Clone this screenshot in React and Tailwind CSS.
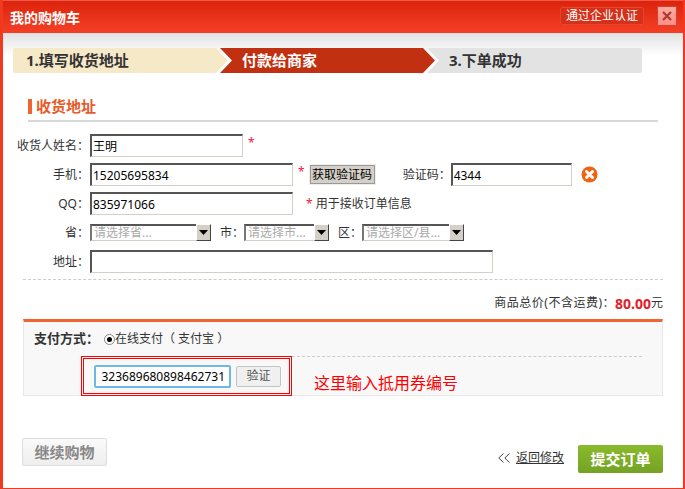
const font = "font-['Noto_Sans','Noto_Sans_CJK_SC',sans-serif]";

function TextInput({ value, width }) {
  return (
    <input
      readOnly
      defaultValue={value}
      className={`${width} h-[23px] border-2 border-t-[#555] border-l-[#555] border-r-[#d4d0c8] border-b-[#d4d0c8] border-r border-b bg-white pl-px text-[12px] text-black outline-none`}
    />
  );
}

function Select({ text, width }) {
  return (
    <div className={`${width} h-[17px] flex items-stretch border-t-2 border-l-2 border-t-[#555] border-l-[#777] border-b border-b-[#d4d0c8] bg-white`}>
      <span className="flex-1 pl-[2px] text-[12px] leading-[14px] text-[#aaa] whitespace-nowrap">{text}</span>
      <span className="w-[15px] -mt-[2px] -mb-px flex items-center justify-center bg-[#d4d0c8] border border-t-white border-l-white border-r-[#444] border-b-[#444]">
        <svg width="9" height="5" viewBox="0 0 9 5"><path d="M0 0h9L4.5 5z" fill="#000" /></svg>
      </span>
    </div>
  );
}

function Row({ label, h, mt, children }) {
  return (
    <div className={`flex items-center ${h} ${mt}`}>
      <label className="w-[74px] pr-[1px] text-right text-[12px] text-[#333] whitespace-nowrap">{label}：</label>
      {children}
    </div>
  );
}

const Star = ({ className }) => <span className={`text-[12px] text-[#f0203a] ${className}`}>*</span>;

export default function App() {
  return (
    <div className={`${font} w-[685px] h-[489px] flex flex-col bg-white border-l-[3px] border-r-2 border-b border-[#f0391f] overflow-hidden`}>

      {/* title bar */}
      <div className="h-[33px] shrink-0 flex items-center bg-gradient-to-b from-[#dc230b] to-[#f53f25] border-t border-[#f0594a] pl-[7px]">
        <span className="text-[14px] font-bold text-white">我的购物车</span>
        <div className="ml-auto flex items-center mr-[6px] -mt-[3px]">
          <span className="w-[84px] h-[18px] flex items-center justify-center rounded-[2px] bg-[#d5301a] border border-[#e8452e] text-[12px] leading-none text-white">通过企业认证</span>
          <span className="ml-[13px] w-[20px] h-[20px] flex items-center justify-center bg-gradient-to-b from-[#ffa9a0] to-[#ff8f86] border border-[#d8402e]">
            <svg width="10" height="10" viewBox="0 0 10 10"><path d="M1 1l8 8M9 1L1 9" stroke="#a83a34" strokeWidth="2.2" /></svg>
          </span>
        </div>
      </div>

      <div className="flex-1 flex flex-col bg-gradient-to-b from-[#e2e2e2] via-white via-[5%] to-white">

        {/* steps */}
        <div className="flex mt-[15px] ml-[10px] h-[25px]">
          <div className="w-[215px] rounded-l-[2px] bg-[#f6e9c8] pl-[13px] text-[15px] leading-[25px] font-bold text-[#333] [clip-path:polygon(0_0,203px_0,215px_50%,203px_100%,0_100%)]">1.填写收货地址</div>
          <div className="w-[215px] -ml-[8px] bg-[#c13010] pl-[22px] text-[15px] leading-[25px] font-bold text-white [clip-path:polygon(0_0,203px_0,215px_50%,203px_100%,0_100%,12px_50%)]">付款给商家</div>
          <div className="w-[215px] -ml-[8px] rounded-r-[2px] bg-[#e3e3e3] pl-[22px] text-[15px] leading-[25px] font-bold text-[#333] [clip-path:polygon(0_0,100%_0,100%_100%,0_100%,12px_50%)]">3.下单成功</div>
        </div>

        {/* heading */}
        <div className="mt-[26px] ml-[25px] mr-[25px] h-[23px] border-b-2 border-[#d8d8d8] flex items-start">
          <span className="w-[4px] h-[15px] bg-[#ee6432]"></span>
          <span className="ml-[4px] text-[15px] leading-[15px] font-bold text-[#e95a2a]">收货地址</span>
        </div>

        {/* form */}
        <Row label="收货人姓名" h="h-[23px]" mt="mt-[12px] ml-[13px]">
          <TextInput value="王明" width="w-[153px]" />
          <Star className="ml-[5px] -mt-[6px]" />
        </Row>
        <Row label="手机" h="h-[23px]" mt="mt-[6px] ml-[13px]">
          <TextInput value="15205695834" width="w-[203px]" />
          <Star className="ml-[5px] -mt-[6px]" />
          <button className="ml-[5px] w-[65px] h-[19px] bg-[#d4d0c8] border border-[#999] outline outline-1 outline-[#eee] text-[12px] leading-none text-black">获取验证码</button>
          <span className="ml-[28px] w-[48px] text-[12px] text-[#333] whitespace-nowrap">验证码：</span>
          <TextInput value="4344" width="w-[121px]" />
          <svg className="ml-[9px]" width="17" height="17" viewBox="0 0 17 17">
            <circle cx="8.5" cy="8.5" r="8" fill="#f0640f" />
            <path d="M5.5 5.5l6 6M11.5 5.5l-6 6" stroke="#fff" strokeWidth="3" strokeLinecap="round" />
          </svg>
        </Row>
        <Row label="QQ" h="h-[23px]" mt="mt-[6px] ml-[13px]">
          <TextInput value="835971066" width="w-[203px]" />
          <Star className="ml-[13px]" />
          <span className="ml-[3px] text-[12px] text-[#333]">用于接收订单信息</span>
        </Row>
        <Row label="省" h="h-[17px]" mt="mt-[9px] ml-[13px]">
          <Select text="请选择省..." width="w-[121px]" />
          <span className="ml-[9px] w-[24px] text-[12px] text-[#333]">市：</span>
          <Select text="请选择市..." width="w-[85px]" />
          <span className="ml-[9px] w-[24px] text-[12px] text-[#333]">区：</span>
          <Select text="请选择区/县..." width="w-[102px]" />
        </Row>
        <Row label="地址" h="h-[23px]" mt="mt-[9px] ml-[13px]">
          <TextInput value="" width="w-[403px]" />
        </Row>

        <div className="mt-[6px] ml-[20px] w-[640px] border-t border-dashed border-[#ccc]"></div>

        <div className="mt-[15px] mr-[20px] h-[16px] flex items-center justify-end text-[12px] text-[#333]">
          <span className="tracking-[0.5px]">商品总价(不含运费)：</span><b className="text-[14px] text-[#e0202a]">80.00</b>元
        </div>

        {/* payment */}
        <div className="mt-[8px] ml-[20px] w-[640px] h-[77px] border-t-[3px] border-t-[#ee6432] border-x border-b border-x-[#e8e8e8] border-b-[#e8e8e8] bg-[#f8f8f8]">
          <div className="h-[34px] flex items-center pl-[10px]">
            <b className="w-[70px] text-[13px] text-[#333] whitespace-nowrap">支付方式：</b>
            <span className="w-[11px] h-[11px] rounded-full border border-[#888] bg-white flex items-center justify-center">
              <span className="w-[5px] h-[5px] rounded-full bg-black"></span>
            </span>
            <span className="text-[12px] text-[#333] whitespace-nowrap">在线支付（ 支付宝 ）</span>
          </div>
          <div className="flex">
            <div className="ml-[57px] w-[211px] h-[40px] border border-[#f00] p-px shrink-0">
              <div className="h-full border border-[#f00] flex items-center pl-[10px]">
                <input readOnly dir="rtl" defaultValue="1323689680898462731" className="w-[137px] h-[23px] rounded-[2px] border-2 border-[#6fb8e4] bg-white px-[4px] text-[12px] text-black outline-none" />
                <span className="ml-[5px] w-[45px] h-[21px] flex items-center justify-center rounded-[2px] bg-[#f0f0f0] border border-[#c4c4c4] text-[12px] text-[#555]">验证</span>
              </div>
            </div>
            <div className="flex-1 mr-[20px]">
              <div className="border-t border-dashed border-[#ccc]"></div>
              <div className="mt-[16px] ml-[22px] text-[16px] leading-[20px] text-[#f00] whitespace-nowrap">这里输入抵用券编号</div>
            </div>
          </div>
        </div>

        {/* footer */}
        <div className="flex items-start mt-[42px] ml-[19px] mr-[20px]">
          <button className="w-[85px] h-[28px] rounded-[2px] bg-gradient-to-b from-[#fafafa] to-[#eee] border border-[#ddd] text-[15px] font-bold text-[#888]">继续购物</button>
          <svg className="ml-auto mt-[15px]" width="12" height="10" viewBox="0 0 12 10" fill="none" stroke="#444"><path d="M5.5 0.5L0.8 5l4.7 4.5M11.5 0.5L6.8 5l4.7 4.5" /></svg>
          <a className="ml-[6px] mt-[12px] text-[12px] leading-[16px] text-[#333] underline">返回修改</a>
          <button className="ml-[14px] mt-[7px] w-[85px] h-[28px] rounded-[2px] bg-gradient-to-b from-[#8aba2c] to-[#74a225] text-[15px] font-bold text-white">提交订单</button>
        </div>

      </div>
    </div>
  );
}
